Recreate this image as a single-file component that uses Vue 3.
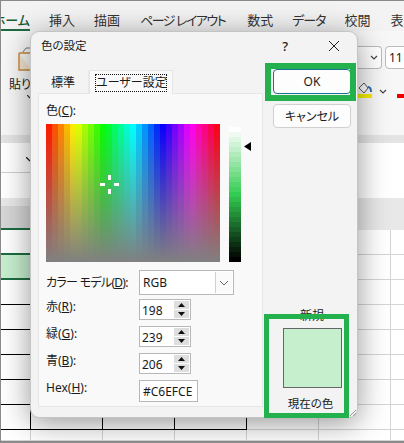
<script setup>
const hueColumns = Array.from({ length: 29 }, (_, i) => {
  const hue = Math.round(((i + 0.5) / 29) * 360)
  return { hue, background: `linear-gradient(hsl(${hue},100%,50%), rgb(128,128,128))` }
})
const lumBands = Array.from({ length: 27 }, (_, i) => {
  const lum = 100 - (i / 26) * 100
  return { lum, background: `hsl(132,60%,${lum}%)` }
})
const spins = [
  { label: '赤', key: 'R', value: '198' },
  { label: '緑', key: 'G', value: '239' },
  { label: '青', key: 'B', value: '206' },
]
const colWidths = [30, 72, 72, 72, 72, 72, 14]
const rows = [
  { h: 25, kind: 'greenline' },
  { h: 25, kind: 'selected' },
  { h: 25, kind: 'black' },
  { h: 25, kind: 'black' },
  { h: 25, kind: 'black' },
  { h: 25, kind: 'black' },
  { h: 25, kind: 'black' },
  { h: 25, kind: 'black' },
  { h: 11, kind: 'last' },
]
function cellClass(row, i) {
  return {
    cell: true,
    'cell-black': row.kind === 'black' && i < 4,
    'cell-green': (row.kind === 'greenline' || row.kind === 'selected') && i === 0,
    'cell-selected': row.kind === 'selected' && i === 0,
  }
}
</script>

<template>
  <div class="screen">
    <nav class="tabs">
      <span class="tab-home">ホーム</span>
      <span class="tab t1">挿入</span>
      <span class="tab t2">描画</span>
      <span class="tab t3">ページ レイアウト</span>
      <span class="tab t4">数式</span>
      <span class="tab t5">データ</span>
      <span class="tab t6">校閲</span>
      <span class="tab t7">表</span>
    </nav>

    <section class="ribbon">
      <div class="paste">
        <svg class="paste-icon" width="14" height="27" viewBox="0 0 14 27">
          <path d="M1 8h12M1 8v17h12" fill="#f5e6cf" stroke="#c98a3c" stroke-width="1.4" />
          <path d="M5 7l3-4h6" fill="none" stroke="#777" stroke-width="1" />
        </svg>
        <span class="paste-label">貼り付け</span>
        <svg class="paste-chev" width="6" height="4" viewBox="0 0 6 4"><path d="M0 0l3 3" fill="none" stroke="#333" stroke-width="1.2" /></svg>
      </div>
      <div class="ribbon-right">
        <div class="font-row">
          <span class="chev-box"><svg width="8" height="5" viewBox="0 0 8 5"><path d="M1 1l3 3 3-3" fill="none" stroke="#444" stroke-width="1.2" /></svg></span>
          <span class="size-box">11</span>
        </div>
        <div class="fill-row">
          <span class="fill">
            <svg width="14" height="12" viewBox="0 0 14 12">
              <path d="M1 6l5-5 4 5-4 5z" fill="#fff" stroke="#555" stroke-width="1" />
              <path d="M10 5c2 0 3 1 3 5" fill="none" stroke="#2f6db5" stroke-width="2" />
            </svg>
            <i class="yellow"></i>
          </span>
          <svg class="fill-chev" width="8" height="5" viewBox="0 0 8 5"><path d="M1 1l3 3 3-3" fill="none" stroke="#444" stroke-width="1.2" /></svg>
          <i class="red"></i>
        </div>
      </div>
    </section>

    <div class="sheet">
      <div class="formula">
        <div class="name-box">
          <svg width="5" height="5" viewBox="0 0 5 5"><path d="M0 0l4 4" fill="none" stroke="#222" stroke-width="1.3" /></svg>
        </div>
      </div>
      <div class="col-head"><div class="corner"></div></div>
      <div v-for="(row, r) in rows" :key="r" class="row" :style="{ height: row.h + 'px' }">
        <div v-for="(w, i) in colWidths" :key="i" :class="cellClass(row, i)" :style="{ width: w + 'px' }"></div>
      </div>
    </div>

    <div class="dialog">
      <header class="title-bar">
        <span class="title">色の設定</span>
        <span class="help">?</span>
        <svg class="close" width="12" height="12" viewBox="0 0 12 12"><path d="M1 1l10 10M11 1L1 11" stroke="#222" stroke-width="1" fill="none" /></svg>
      </header>

      <div class="body">
        <div class="left">
          <div class="dlg-tabs">
            <span class="dlg-tab">標準</span>
            <span class="dlg-tab dlg-tab-on"><span class="focus">ユーザー設定</span></span>
          </div>
          <div class="panel">
            <div class="color-label">色(<u>C</u>):</div>
            <div class="picker-row">
              <div class="spectrum">
                <div v-for="c in hueColumns" :key="c.hue" class="hue" :style="{ background: c.background }"></div>
                <svg class="cross" width="19" height="19" viewBox="0 0 19 19">
                  <path d="M0 8h5v3H0zM14 8h5v3h-5zM8 0h3v5H8zM8 14h3v5H8z" fill="#fff" />
                </svg>
              </div>
              <div class="lum">
                <div v-for="b in lumBands" :key="b.lum" class="band" :style="{ background: b.background }"></div>
              </div>
              <svg class="pointer" width="7" height="9" viewBox="0 0 7 9"><path d="M0 4.5L7 0v9z" fill="#000" /></svg>
            </div>
            <div class="form">
              <div class="field model">
                <span class="lbl">カラー モデル(<u>D</u>):</span>
                <span class="select">
                  <span class="select-text">RGB</span>
                  <span class="select-btn"><svg width="10" height="6" viewBox="0 0 10 6"><path d="M1 1l4 4 4-4" fill="none" stroke="#666" stroke-width="1" /></svg></span>
                </span>
              </div>
              <div v-for="s in spins" :key="s.key" class="field spin-field">
                <span class="lbl">{{ s.label }}(<u>{{ s.key }}</u>):</span>
                <span class="spin">
                  <span class="spin-val">{{ s.value }}</span>
                  <span class="spin-btns">
                    <span class="spin-btn"><svg width="7" height="4" viewBox="0 0 7 4"><path d="M3.5 0L7 4H0z" fill="#111" /></svg></span>
                    <span class="spin-btn"><svg width="7" height="4" viewBox="0 0 7 4"><path d="M3.5 4L0 0h7z" fill="#111" /></svg></span>
                  </span>
                </span>
              </div>
              <div class="field hex-field">
                <span class="lbl">Hex(<u>H</u>):</span>
                <span class="hex">#C6EFCE</span>
              </div>
            </div>
          </div>
        </div>

        <aside class="right">
          <button class="btn btn-ok">OK</button>
          <button class="btn btn-cancel">キャンセル</button>
          <div class="preview">
            <span class="new-label">新規</span>
            <div class="swatch"></div>
            <span class="cur-label">現在の色</span>
          </div>
        </aside>
      </div>

      <svg class="grip" width="9" height="9" viewBox="0 0 9 9">
        <path d="M8 2L2 8M8 5L5 8" stroke="#999" stroke-width="1" fill="none" />
      </svg>
    </div>

    <div class="mark mark-ok"></div>
    <div class="mark mark-preview"></div>
  </div>
</template>

<style scoped>
.screen {
  position: relative;
  width: 404px;
  height: 443px;
  overflow: hidden;
  box-sizing: border-box;
  display: flex;
  flex-direction: column;
  background: #fff;
  border-top: 1px solid #8a8a8a;
  border-left: 1px solid #8a8a8a;
  border-bottom: 2px solid #8a8a8a;
  font-family: "Noto Sans", "Noto Sans CJK JP", sans-serif;
  font-feature-settings: "palt";
  color: #1a1a1a;
}
.tabs {
  height: 30px;
  flex: none;
  display: flex;
  align-items: flex-start;
  background: #f3f3f3;
  font-size: 13px;
  line-height: 18px;
  white-space: nowrap;
  overflow: hidden;
  padding-top: 10px;
  box-sizing: border-box;
}
.tab-home {
  width: 29px;
  flex: none;
  overflow: hidden;
  direction: rtl;
  font-weight: 500;
  color: #185c37;
  border-bottom: 2px solid #1d6b42;
  height: 18px;
}
.tab { flex: none; color: #333; }
.t1 { margin-left: 19px; }
.t2 { margin-left: 19px; }
.t3 { margin-left: 20px; letter-spacing: -1.5px; }
.t4 { margin-left: 22px; }
.t5 { margin-left: 19px; letter-spacing: -1px; }
.t6 { margin-left: 19px; }
.t7 { margin-left: 20px; }

.ribbon {
  height: 112px;
  flex: none;
  display: flex;
  justify-content: space-between;
  background: #f7f7f7;
  border-bottom: 8px solid #e4e4e4;
  box-sizing: border-box;
}
.paste {
  display: flex;
  flex-direction: column;
  padding: 14px 0 0 17px;
  width: 29px;
  box-sizing: content-box;
  overflow: hidden;
}
.paste-icon { flex: none; }
.paste-label {
  font-size: 12px;
  line-height: 16px;
  margin: 5px 0 0 -9px;
  white-space: nowrap;
}
.paste-chev { margin: 2px 0 0 9px; flex: none; }
.ribbon-right {
  width: 46px;
  padding-top: 15px;
  display: flex;
  flex-direction: column;
  overflow: hidden;
}
.font-row { display: flex; height: 23px; }
.chev-box {
  width: 24px;
  height: 23px;
  flex: none;
  display: flex;
  align-items: center;
  justify-content: flex-end;
  padding-right: 3px;
  box-sizing: border-box;
  border: 1px solid #bbb;
  border-left: none;
  border-radius: 0 4px 4px 0;
  background: #fff;
}
.size-box {
  margin-left: 3px;
  flex: none;
  width: 24px;
  height: 23px;
  box-sizing: border-box;
  border: 1px solid #bbb;
  border-radius: 4px 0 0 4px;
  font-size: 12px;
  line-height: 21px;
  padding-left: 3px;
  background: #fff;
}
.fill-row { display: flex; align-items: flex-start; margin-top: 13px; }
.fill { width: 14px; flex: none; display: flex; flex-direction: column; }
.yellow { display: block; height: 4px; background: #f6ee00; }
.fill-chev { margin: 7px 0 0 7px; flex: none; }
.red { display: block; width: 8px; height: 4px; background: #f00000; margin: 12px 0 0 10px; flex: none; }

.sheet { flex: 1; display: flex; flex-direction: column; min-height: 0; }
.formula {
  height: 55px;
  flex: none;
  background: #fff;
}
.name-box {
  width: 30px;
  height: 30px;
  box-sizing: border-box;
  border-bottom: 1px solid #cfcfcf;
  padding: 14px 0 0 25px;
  display: flex;
  align-items: flex-start;
}
.col-head {
  height: 32px;
  flex: none;
  background: #e8e8e8;
  display: flex;
  align-items: flex-end;
}
.corner {
  width: 30px;
  height: 24px;
  background: #d6d6d6;
  border-bottom: 2px solid #1d6b42;
  box-sizing: border-box;
}
.row { display: flex; flex: none; }
.cell {
  flex: none;
  box-sizing: border-box;
  border-right: 1px solid #d4d4d4;
  border-bottom: 1px solid #d4d4d4;
}
.cell-black { border-right-color: #000; border-bottom-color: #000; }
.cell-green { border-bottom: 2px solid #1d6b42; }
.cell-selected { background: #c6efce; }

.dialog {
  position: absolute;
  left: 29px;
  top: 30px;
  width: 328px;
  height: 387px;
  box-sizing: border-box;
  background: #f3f3f3;
  border-radius: 9px;
  border: 1px solid #c4c4c4;
  box-shadow: 0 5px 30px rgba(0, 0, 0, 0.42);
  display: flex;
  flex-direction: column;
  font-size: 12px;
}
.title-bar {
  height: 37px;
  flex: none;
  display: flex;
  align-items: center;
  padding: 0 17px 0 10px;
  box-sizing: border-box;
}
.title { flex: 1; font-size: 11.5px; line-height: 16px; padding-bottom: 10px; }
.help { font-size: 13px; font-weight: 500; padding-bottom: 10px; margin-right: 40px; }
.close { margin-bottom: 10px; }
.body { flex: 1; display: flex; min-height: 0; }
.left { width: 225px; margin-left: 7px; display: flex; flex-direction: column; flex: none; }
.dlg-tabs { height: 24px; flex: none; display: flex; align-items: flex-end; position: relative; top: 1px; z-index: 1; }
.dlg-tab {
  width: 51px;
  height: 23px;
  text-align: center;
  line-height: 23px;
  font-size: 12px;
  border-right: 1px solid #e8e8e8;
  box-sizing: border-box;
}
.dlg-tab-on {
  width: 84px;
  height: 24px;
  background: #f9f9f9;
  border: 1px solid #e6e6e6;
  border-bottom: none;
  padding: 3px 5px 0;
  line-height: 17px;
}
.focus { display: block; border: 1px dotted #111; white-space: nowrap; height: 18px; line-height: 16px; box-sizing: border-box; font-size: 12px; }
.panel {
  flex: 1;
  background: #f9f9f9;
  border: 1px solid #e6e6e6;
  box-sizing: border-box;
  margin-bottom: 10px;
  padding: 9px 0 0 7px;
  position: relative;
}
.color-label { font-size: 12px; line-height: 16px; height: 21px; }
.picker-row { display: flex; align-items: flex-start; height: 146px; }
.spectrum { width: 174px; height: 138px; display: flex; position: relative; flex: none; }
.hue { flex: 1; }
.cross { position: absolute; left: 54px; top: 51px; }
.lum { width: 12px; height: 135px; margin: 3px 0 0 9px; display: flex; flex-direction: column; flex: none; }
.band { flex: 1; }
.pointer { margin: 18px 0 0 3px; flex: none; }
.form { display: flex; flex-direction: column; }
.field { display: flex; align-items: flex-start; }
.lbl { width: 93px; flex: none; font-size: 12px; line-height: 16px; white-space: nowrap; }
.model { height: 29px; }
.model .lbl { padding-top: 5px; letter-spacing: -0.7px; }
.select {
  width: 95px;
  height: 25px;
  box-sizing: border-box;
  border: 1px solid #b8b8b8;
  background: #fff;
  display: flex;
}
.select-text { flex: 1; line-height: 23px; padding-left: 3px; font-size: 12px; }
.select-btn {
  width: 17px;
  margin: 1px;
  background: #fafafa;
  border-left: 1px solid #d0d0d0;
  display: flex;
  align-items: center;
  justify-content: center;
  box-sizing: border-box;
}
.spin-field { height: 27px; }
.spin {
  width: 52px;
  height: 21px;
  box-sizing: border-box;
  border: 1px solid #b8b8b8;
  background: #fff;
  display: flex;
}
.spin-val { flex: 1; font-size: 12px; line-height: 21px; padding-left: 2px; }
.spin-btns { width: 15px; margin: 1px 1px 1px 0; display: flex; flex-direction: column; gap: 1px; }
.spin-btn {
  flex: 1;
  background: #dedede;
  display: flex;
  align-items: center;
  justify-content: center;
}
.hex-field { height: 22px; }
.hex {
  width: 59px;
  height: 22px;
  box-sizing: border-box;
  border: 1px solid #b8b8b8;
  background: #fff;
  font-size: 12px;
  line-height: 22px;
  padding-left: 3px;
  white-space: nowrap;
  overflow: hidden;
}
.right {
  flex: 1;
  display: flex;
  flex-direction: column;
  padding-left: 10px;
  padding-right: 6px;
  box-sizing: border-box;
}
.btn {
  width: 78px;
  box-sizing: border-box;
  background: #fdfdfd;
  border: 1px solid #d0d0d0;
  border-radius: 4px;
  font: inherit;
  font-feature-settings: "palt";
  color: #1a1a1a;
  padding: 0;
  flex: none;
}
.btn-ok {
  height: 25px;
  border: 1.5px solid #1a6f96;
  font-size: 12px;
}
.btn-cancel { height: 24px; margin-top: 10px; font-size: 12px; }
.preview {
  margin-top: auto;
  width: 78px;
  display: flex;
  flex-direction: column;
  align-items: center;
  margin-bottom: 5px;
}
.new-label { font-size: 12px; line-height: 16px; }
.swatch {
  width: 59px;
  height: 60px;
  box-sizing: border-box;
  margin-top: 4px;
  background: #c6efce;
  border: 1px solid #666;
}
.cur-label { font-size: 11.5px; line-height: 16px; margin: 8px 3px 0 0; }
.grip { position: absolute; right: 0; bottom: 0; }

.mark { position: absolute; box-sizing: border-box; border: 6px solid #22b14c; }
.mark-ok { left: 264px; top: 62px; width: 91px; height: 38px; }
.mark-preview { left: 263px; top: 313px; width: 85px; height: 104px; border-width: 5px; }
</style>
